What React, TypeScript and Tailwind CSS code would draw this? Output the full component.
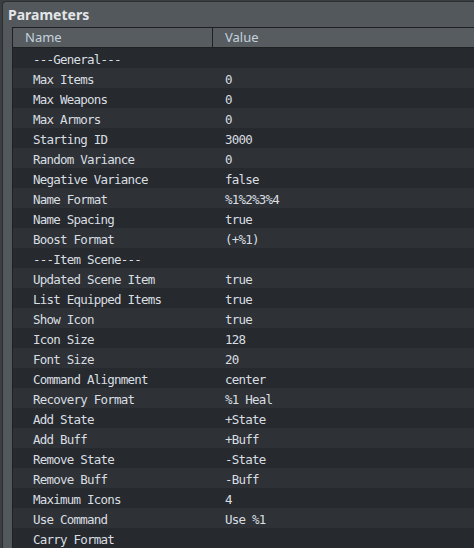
import React from 'react';

type Param = { name: string; value: string };

const params: Param[] = [
  { name: '---General---', value: '' },
  { name: 'Max Items', value: '0' },
  { name: 'Max Weapons', value: '0' },
  { name: 'Max Armors', value: '0' },
  { name: 'Starting ID', value: '3000' },
  { name: 'Random Variance', value: '0' },
  { name: 'Negative Variance', value: 'false' },
  { name: 'Name Format', value: '%1%2%3%4' },
  { name: 'Name Spacing', value: 'true' },
  { name: 'Boost Format', value: '(+%1)' },
  { name: '---Item Scene---', value: '' },
  { name: 'Updated Scene Item', value: 'true' },
  { name: 'List Equipped Items', value: 'true' },
  { name: 'Show Icon', value: 'true' },
  { name: 'Icon Size', value: '128' },
  { name: 'Font Size', value: '20' },
  { name: 'Command Alignment', value: 'center' },
  { name: 'Recovery Format', value: '%1 Heal' },
  { name: 'Add State', value: '+State' },
  { name: 'Add Buff', value: '+Buff' },
  { name: 'Remove State', value: '-State' },
  { name: 'Remove Buff', value: '-Buff' },
  { name: 'Maximum Icons', value: '4' },
  { name: 'Use Command', value: 'Use %1' },
  { name: 'Carry Format', value: '' },
];

const sans = "font-['Noto_Sans',sans-serif]";
const mono = "font-['DejaVu_Sans_Mono',monospace]";

export default function App() {
  return (
    <div className="w-[474px] h-[548px] overflow-hidden bg-[#3b3e41] pl-[2px] pt-[1px]">
      <div className="h-full rounded-tl-[4px] border-l border-t border-[#2b2d2f] bg-[#53585c] flex flex-col">
        <div className={`h-[25px] pl-[5px] pt-[4px] text-[14px] font-bold leading-[18px] text-[#e3e6e8] ${sans}`}>
          Parameters
        </div>
        <div className="ml-[9px] flex-1 border-l border-t border-[#1e2022] bg-[#2a2d31]">
          <div className={`flex h-[20px] border-b border-[#1e2022] bg-[#575c60] text-[13px] leading-[19px] text-[#c4d2de] ${sans}`}>
            <div className="w-[200px] shrink-0 border-r border-[#1e2022] pl-[12px]">Name</div>
            <div className="pl-[12px]">Value</div>
          </div>
          {params.map((p, i) => (
            <div
              key={p.name}
              className={`flex h-[20px] pt-[3px] text-[12.5px] leading-[17px] tracking-[-0.77px] text-[#d9dee2] ${mono} ${
                i % 2 === 0 ? 'bg-[#262a2e]' : 'bg-[#2e3236]'
              }`}
            >
              <div className="w-[201px] shrink-0 pl-[20px] whitespace-pre">{p.name}</div>
              <div className="pl-[11px] whitespace-pre">{p.value}</div>
            </div>
          ))}
        </div>
      </div>
    </div>
  );
}
